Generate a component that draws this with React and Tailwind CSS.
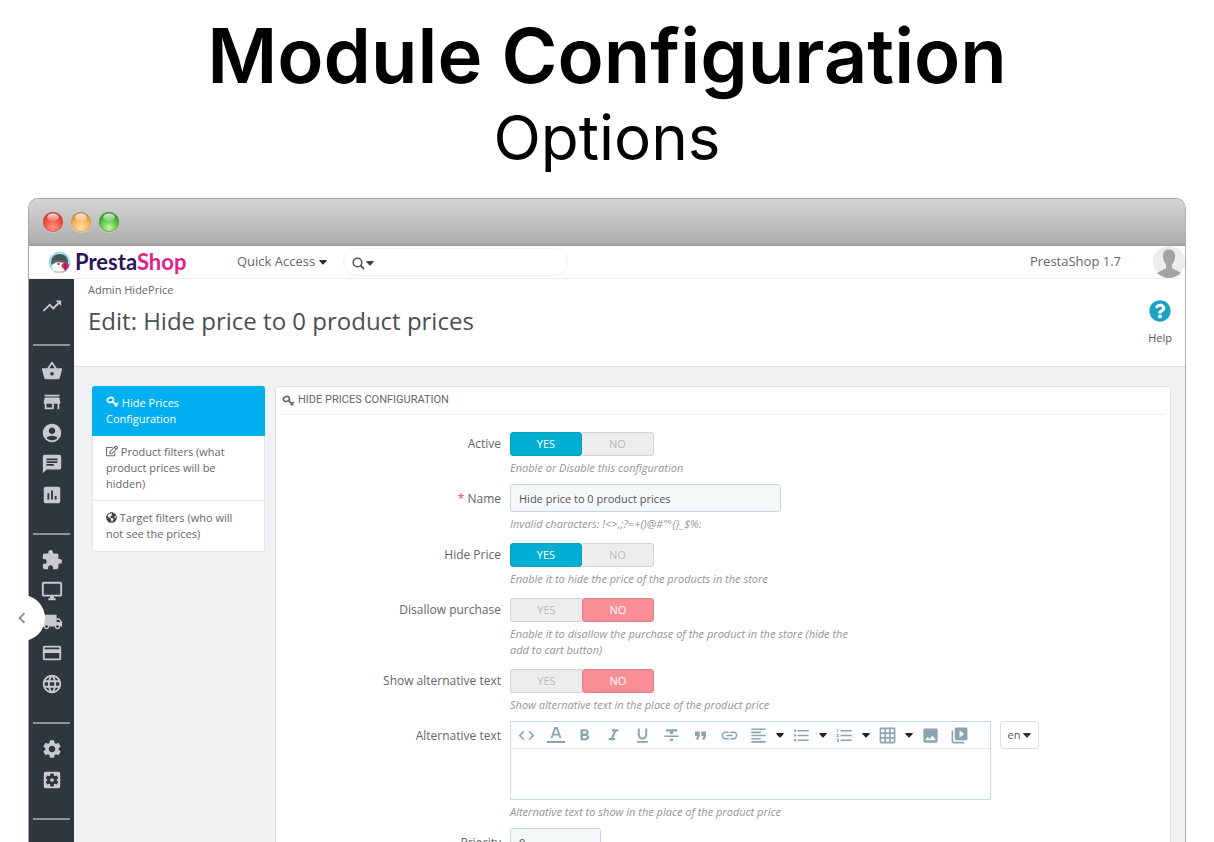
import React, { useState } from "react";
import {
  MdTrendingUp, MdShoppingBasket, MdStore, MdAccountCircle, MdChat, MdAssessment, MdExtension,
  MdOutlineDesktopWindows, MdLocalShipping, MdPayment, MdLanguage, MdSettings, MdSettingsApplications,
  MdCode, MdFormatBold, MdFormatItalic, MdFormatUnderlined, MdFormatStrikethrough,
  MdFormatQuote, MdLink, MdFormatAlignLeft, MdFormatListBulleted, MdFormatListNumbered, MdGridOn,
  MdImage, MdVideoLibrary, MdChevronLeft,
} from "react-icons/md";
import { FaRegEdit, FaGlobeAmericas, FaQuestionCircle } from "react-icons/fa";

function Caret({ className = "" }) {
  return (
    <svg viewBox="0 0 8 5" className={"inline-block h-[5px] w-2 " + className} fill="currentColor" aria-hidden="true">
      <path d="M0.5 0h7Q8 .4 7.6 .9L4.4 4.4Q4 4.8 3.6 4.4L.4 .9Q0 .4 .5 0z" />
    </svg>
  );
}

function KeyIcon({ className = "" }) {
  return (
    <svg viewBox="0 0 13 12" className={"inline-block h-3 w-[13px] " + className} fill="none" stroke="currentColor" aria-hidden="true">
      <ellipse cx="4.4" cy="4" rx="3.1" ry="2.4" strokeWidth="1.7" transform="rotate(-20 4.4 4)" />
      <path d="M6.6 5.6l4.6 4.4" strokeWidth="1.8" />
      <path d="M8.9 10.4l1.1-1.4M10.2 7.4h2.2" strokeWidth="1.5" />
    </svg>
  );
}

function Puffin() {
  return (
    <svg viewBox="0 0 24 24" className="size-[23px]" aria-hidden="true">
      <circle cx="12" cy="12" r="11.3" fill="#a4dbe8" />
      <path d="M3.5 13C3 6.5 7 3 12 3s9 3.5 8.8 8l-1 8c-4 4-11 4-14.5 0z" fill="#4a545c" />
      <path d="M4 14c1.500-3 6-3.500 8-2 2-1.500 5.500-1 6.500 1.500l-.5 6c-3 3.500-10 4-13.500 0z" fill="#f8f8f6" />
      <path d="M3.500 11.500c4-3 11-3.500 16 0l-1 2c-4-3-10-3-14.500 1z" fill="#5d656b" />
      <path d="M14 14.500c2-2.500 5-3 7.500-1 1.200 2-.5 5.500-3.500 6.500-1.500-2-4-2.500-4-5.500z" fill="#d8265f" />
      <path d="M17 13c1.500 2 1.500 4.500.5 6.500" stroke="#8d1d4d" strokeWidth="1.2" fill="none" />
      <circle cx="11" cy="13.5" r="1.1" fill="#2d3238" />
      <path d="M6 20c4 2 8 2 12 0-2 3-9 4-12 0z" fill="#c9c2ad" />
    </svg>
  );
}

function Light({ id, edge, core, glow }) {
  return (
    <svg viewBox="0 0 22 22" className="size-[22px]" aria-hidden="true">
      <defs>
        <radialGradient id={id} cx="50%" cy="78%" r="70%">
          <stop offset="0" stopColor={glow} />
          <stop offset="0.6" stopColor={core} />
          <stop offset="1" stopColor={edge} />
        </radialGradient>
        <linearGradient id={id + "s"} x1="0" y1="0" x2="0" y2="1">
          <stop offset="0" stopColor="#fff" stopOpacity="0.85" />
          <stop offset="1" stopColor="#fff" stopOpacity="0.15" />
        </linearGradient>
      </defs>
      <circle cx="11" cy="11.6" r="10.2" fill="#e2e2e2" />
      <circle cx="11" cy="11" r="9.8" fill={"url(#" + id + ")"} stroke={edge} strokeWidth="0.6" />
      <ellipse cx="11" cy="6.3" rx="5.8" ry="3.8" fill={"url(#" + id + "s)"} />
    </svg>
  );
}

function Avatar() {
  return (
    <svg viewBox="0 0 32 32" className="size-8" role="img" aria-label="Employee">
      <clipPath id="avatarClip"><circle cx="16" cy="16" r="16" /></clipPath>
      <g clipPath="url(#avatarClip)">
        <rect width="32" height="32" fill="#ececec" />
        <path d="M16 3.5c4 0 6.300 3 6 7.200-.2 3.500-1.500 6-3 7.800v3.500c1.500 2 6.500 2.500 9 5V33H4v-5.500c2.500-3 7.500-3.500 9-5.500v-3.500c-1.500-1.800-2.800-4.300-3-7.800C9.700 6.500 12 3.500 16 3.500z" fill="#a3a3a3" />
      </g>
    </svg>
  );
}

const menuGroups = [
  [["Dashboard", MdTrendingUp]],
  [["Orders", MdShoppingBasket], ["Catalog", MdStore], ["Customers", MdAccountCircle], ["Customer Service", MdChat], ["Stats", MdAssessment]],
  [["Modules", MdExtension], ["Design", MdOutlineDesktopWindows], ["Shipping", MdLocalShipping], ["Payment", MdPayment], ["International", MdLanguage]],
  [["Shop Parameters", MdSettings], ["Advanced Parameters", MdSettingsApplications]],
];

function SideMenu() {
  return (
    <nav className="w-[45px] shrink-0 bg-[#2f363f] pt-[2px] text-[#c8cacd]" aria-label="Main menu">
      {menuGroups.map((group, i) => (
        <ul key={i} className="mx-1 border-b-2 border-[#8b9299] pt-[9px] pb-[23px]">
          {group.map(([name, Icon]) => (
            <li key={name}>
              <a href="#" aria-label={name} className="flex h-[31px] items-center justify-center">
                <Icon size={22} />
              </a>
            </li>
          ))}
        </ul>
      ))}
    </nav>
  );
}

function Field({ label, id, required, help, children }) {
  return (
    <div className="flex gap-[9px] pb-2">
      <label htmlFor={id} className="w-[225px] shrink-0 pt-px text-right text-[12px] leading-[28px] text-[#666]">
        {required && <span className="text-[#e8424f]">* </span>}
        {label}
      </label>
      <div className="min-w-0">
        {children}
        {help && <p className="mt-1 max-w-[352px] text-[11px] leading-4 text-[#959595] italic">{help}</p>}
      </div>
    </div>
  );
}

function Toggle({ id, label, initial }) {
  const [on, setOn] = useState(initial);
  const idle = "border-[#d4d4d4] bg-[#ededed] text-[#bbb]";
  const cell = "flex w-[72px] cursor-pointer items-center justify-center border text-[11px] leading-4 ";
  return (
    <div className="relative mt-[3px] flex h-6" role="radiogroup" aria-label={label}>
      <label className={cell + "rounded-l-[3px] " + (on ? "rounded-r-[3px] border-[#0aa0c0] bg-[#00aed1] text-white" : "border-r-0 " + idle)}>
        <input id={id} type="radio" name={id} className="sr-only" checked={on} onChange={() => setOn(true)} />
        YES
      </label>
      <label className={cell + "rounded-r-[3px] " + (on ? "border-l-0 " + idle : "rounded-l-[3px] border-[#e07f88] bg-[#f98e97] text-white")}>
        <input type="radio" name={id} className="sr-only" checked={!on} onChange={() => setOn(false)} />
        NO
      </label>
    </div>
  );
}

function TextColor() {
  return (
    <svg viewBox="0 0 20 20" className="size-5" aria-hidden="true">
      <path d="M5.5 13L9.200 3h1.600L14.500 13M6.800 9.700h6.400" fill="none" stroke="currentColor" strokeWidth="1.8" />
      <rect x="1" y="16" width="18" height="2" fill="currentColor" />
    </svg>
  );
}

const tools = [
  ["Source code", MdCode], ["Text color", TextColor], ["Bold", MdFormatBold], ["Italic", MdFormatItalic],
  ["Underline", MdFormatUnderlined], ["Strikethrough", MdFormatStrikethrough], ["Blockquote", MdFormatQuote],
  ["Insert link", MdLink], ["Align", MdFormatAlignLeft, true], ["Bullet list", MdFormatListBulleted, true],
  ["Numbered list", MdFormatListNumbered, true], ["Table", MdGridOn, true], ["Insert image", MdImage], ["Insert video", MdVideoLibrary],
];

function Editor() {
  return (
    <div className="flex items-start gap-[9px]">
      <div className="w-[481px] border border-[#c9dbe2] bg-white">
        <div className="flex h-[27px] items-center border-b border-[#e6ecef] bg-[#fcfdfe] pl-px text-[#8ba4ae]" role="toolbar" aria-label="Text formatting">
          {tools.map(([name, Icon, menu]) => (
            <button key={name} type="button" aria-label={name} className="flex h-6 items-center">
              <span className="flex w-[29px] justify-center"><Icon size={19} /></span>
              {menu && <span className="flex w-[14px] justify-center"><Caret className="text-[#222]" /></span>}
            </button>
          ))}
        </div>
        <textarea id="alt" className="block h-[50px] w-full resize-none px-2 text-[12px] outline-none" />
      </div>
      <button type="button" className="flex h-7 w-[39px] items-center justify-center gap-[3px] rounded-[3px] border border-[#dcdfe2] bg-white text-[11px] text-[#555]">
        en <Caret className="text-[#333]" />
      </button>
    </div>
  );
}

const inputStyle = "block rounded-[3px] border border-[#c7d6db] bg-[#f5f8f9] px-2 text-[11px] text-[#555] outline-none ";

export default function App() {
  return (
    <div className="relative flex h-screen flex-col overflow-hidden bg-white font-['Open_Sans',sans-serif]">
      <header className="h-[198px] shrink-0 text-center font-['Inter',sans-serif] text-black">
        <h1 className="pt-[11px] text-[76px] leading-[88px] font-semibold">Module Configuration</h1>
        <p className="text-[62px] leading-[78px]">Options</p>
      </header>

      <section className="mx-[28px] flex min-h-0 flex-1 flex-col overflow-hidden rounded-t-[10px] border border-b-0 border-[#a6a6a6] border-r-[#b0b0b0]">
        <div className="flex h-[47px] shrink-0 items-center gap-[6px] border-b-2 border-[#a0a0a0] bg-linear-to-b from-[#d6d6d6] to-[#adadad] pl-[13px]">
          <Light id="close" edge="#c8382c" core="#f05542" glow="#ff9a86" />
          <Light id="minimise" edge="#d58a3c" core="#f9b462" glow="#ffe0a0" />
          <Light id="zoom" edge="#2f9426" core="#5fc54a" glow="#c4f5a0" />
        </div>

        <div className="flex h-[33px] shrink-0 items-center border-b border-[#eee] bg-white text-[12px] text-[#666]">
          <a href="#" className="ml-[19px] flex w-[189px] items-center gap-1 font-['Lato',sans-serif] text-[22px] leading-6 font-bold text-[#2a1657]">
            <Puffin />
            <span>Presta<span className="text-[#e2218b]">Shop</span></span>
          </a>
          <button type="button" className="flex w-[106px] items-center gap-1 text-[13px]">
            Quick Access <Caret className="text-[#333]" />
          </button>
          <div className="flex h-7 w-[225px] items-center rounded-full border border-[#f0f0f0] pl-2 text-[#555]">
            <svg viewBox="0 0 13 13" className="mt-[3px] size-[13px]" fill="none" stroke="currentColor" aria-hidden="true">
              <circle cx="5.5" cy="5.5" r="4.3" strokeWidth="1.6" />
              <path d="M8.500 8.500l3.500 3.500" strokeWidth="1.8" />
            </svg>
            <Caret className="mt-[3px] ml-px text-[#444]" />
            <input aria-label="Search" type="search" className="min-w-0 flex-1 outline-none" />
          </div>
          <span className="ml-auto text-[13px]">PrestaShop 1.7</span>
          <div className="ml-8"><Avatar /></div>
        </div>

        <div className="flex min-h-0 flex-1">
          <SideMenu />
          <main className="min-w-0 flex-1 bg-[#eff1f3]">
            <div className="flex h-[88px] justify-between border-b border-[#dfe2e4] bg-white pr-[13px] pl-[14px]">
              <div>
                <p className="pt-[3px] text-[11px] leading-4 text-[#666]">Admin HidePrice</p>
                <h2 className="pt-[7px] text-[24px] leading-8 text-[#4a4f53]">Edit: Hide price to 0 product prices</h2>
              </div>
              <a href="#" className="flex flex-col items-center pt-[21px] text-[11px] leading-4 text-[#555]">
                <FaQuestionCircle size={22} className="text-[#1ba3c1]" />
                <span className="mt-2">Help</span>
              </a>
            </div>

            <div className="flex items-start gap-[10px] pt-[19px] pr-[14px] pl-[18px]">
              <nav className="w-[173px] shrink-0 text-[11px] leading-4 text-[#666]" aria-label="Sections">
                <a href="#" className="block rounded-t-[3px] bg-[#00aff0] py-[9px] pr-6 pl-[14px] text-white">
                  <KeyIcon className="align-[-1px]" /> Hide Prices Configuration
                </a>
                <a href="#" className="block border-x border-b border-[#e3e6e8] bg-white py-2 pr-6 pl-[13px]">
                  <FaRegEdit size={12} className="inline align-[-1px]" /> Product filters (what product prices will be hidden)
                </a>
                <a href="#" className="block rounded-b-[3px] border-x border-b border-[#e3e6e8] bg-white py-[9px] pr-6 pl-[13px]">
                  <FaGlobeAmericas size={11} className="inline align-[-1px] text-[#444]" /> Target filters (who will not see the prices)
                </a>
              </nav>

              <form className="min-w-0 flex-1 rounded-[4px] border border-[#dfe2e5] bg-white">
                <h3 className="mx-1 flex h-7 items-center gap-[3px] border-b border-[#eee] pl-[2px] font-['Roboto',sans-serif] text-[11px] text-[#666]">
                  <KeyIcon /> HIDE PRICES CONFIGURATION
                </h3>
                <div className="pt-[14px]">
                  <Field label="Active" id="active" help="Enable or Disable this configuration">
                    <Toggle id="active" label="Active" initial={true} />
                  </Field>
                  <Field label="Name" id="name" required help={"Invalid characters: !<>,;?=+()@#\"°{}_$%:"}>
                    <input id="name" type="text" defaultValue="Hide price to 0 product prices" className={inputStyle + "h-7 w-[271px]"} />
                  </Field>
                  <Field label="Hide Price" id="hide" help="Enable it to hide the price of the products in the store">
                    <Toggle id="hide" label="Hide Price" initial={true} />
                  </Field>
                  <Field label="Disallow purchase" id="disallow" help="Enable it to disallow the purchase of the product in the store (hide the add to cart button)">
                    <Toggle id="disallow" label="Disallow purchase" initial={false} />
                  </Field>
                  <Field label="Show alternative text" id="showalt" help="Show alternative text in the place of the product price">
                    <Toggle id="showalt" label="Show alternative text" initial={false} />
                  </Field>
                  <Field label="Alternative text" id="alt" help="Alternative text to show in the place of the product price">
                    <Editor />
                  </Field>
                  <Field label="Priority" id="priority">
                    <input id="priority" type="text" defaultValue="0" className={inputStyle + "h-7 w-[91px]"} />
                  </Field>
                </div>
              </form>
            </div>
          </main>
        </div>
      </section>

      <button type="button" aria-label="Previous" className="absolute top-[595px] left-[-1px] flex size-[46px] items-center justify-center rounded-full bg-white text-[#888]">
        <MdChevronLeft size={22} />
      </button>
    </div>
  );
}
